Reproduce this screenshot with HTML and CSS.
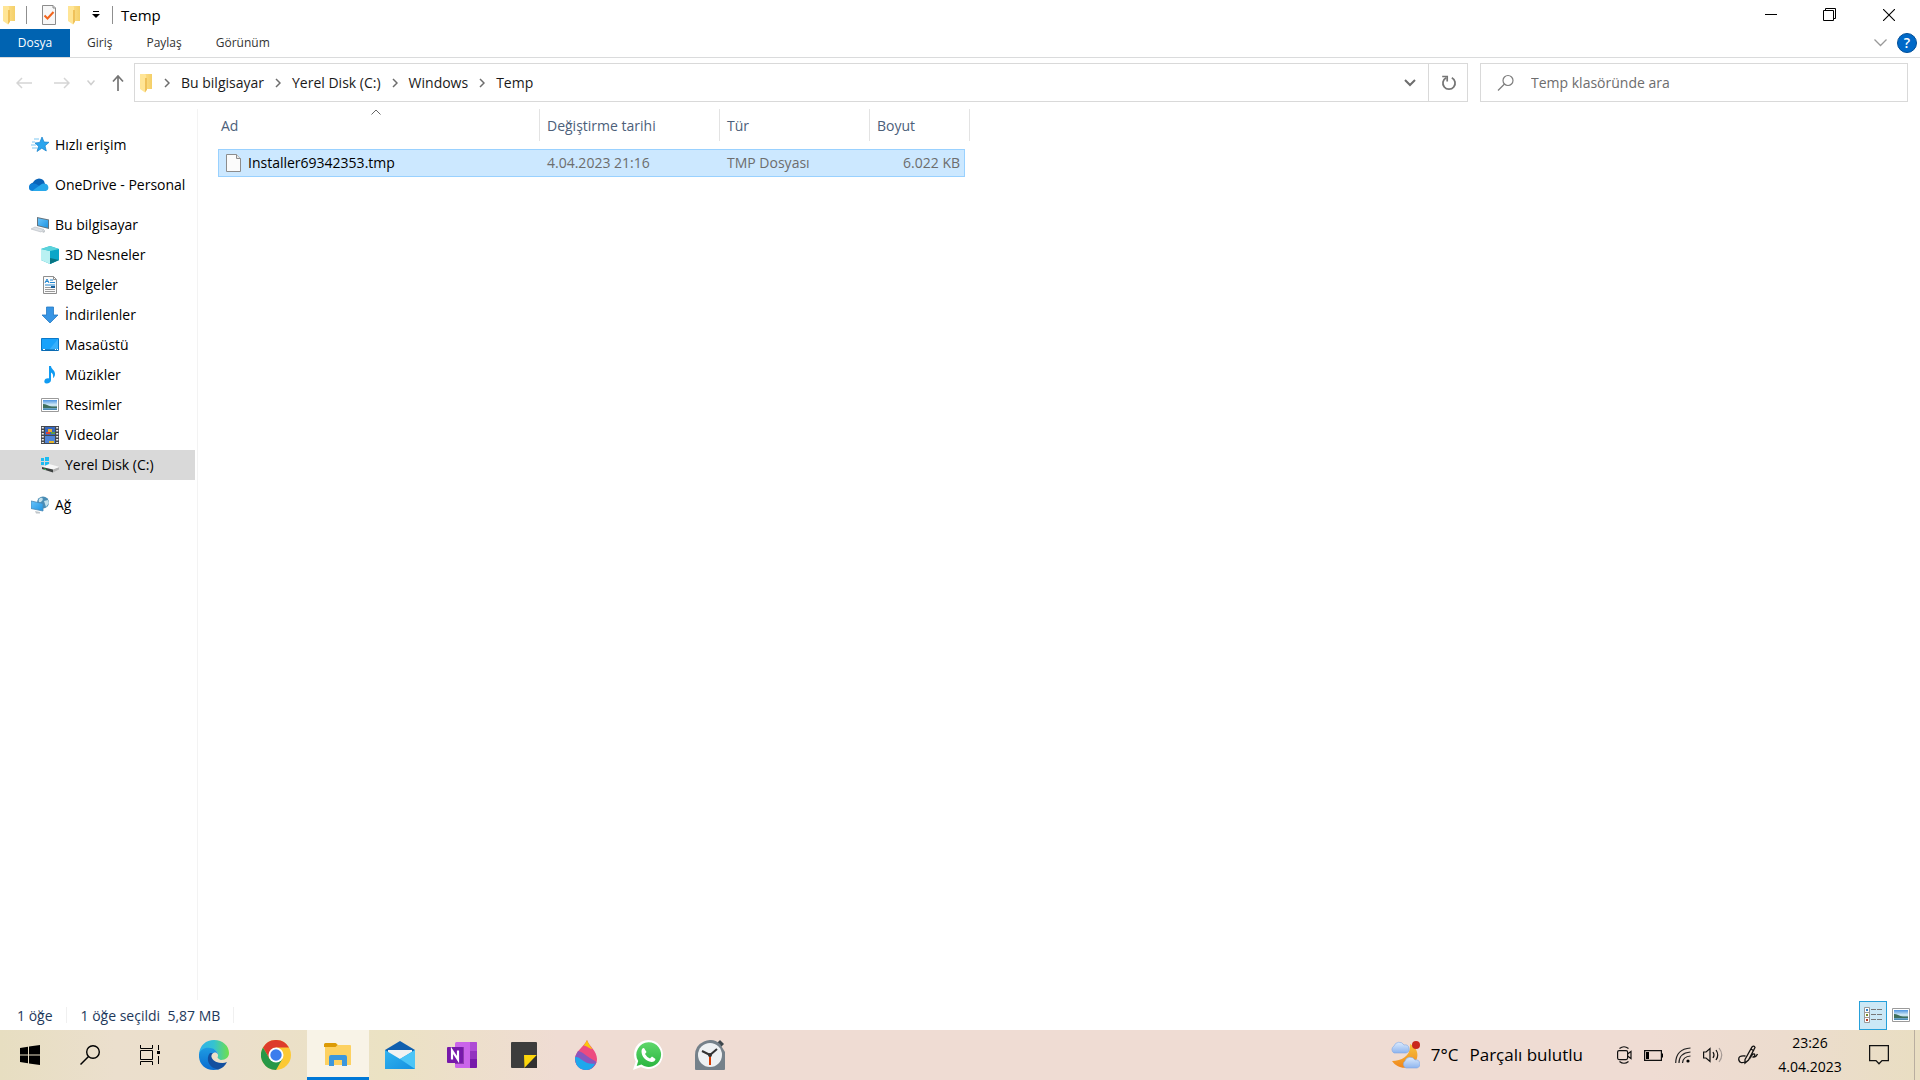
FILE: index.html
```html
<!DOCTYPE html>
<html lang="tr">
<head>
<meta charset="utf-8">
<meta name="viewport" content="width=device-width, initial-scale=1">
<title>Temp</title>
<link rel="stylesheet" href="styles.css">
</head>
<body>
<svg class="defs" aria-hidden="true">
  <defs>
    <linearGradient id="gFolder" x1="0" x2="1" y1="0" y2="0"><stop offset="0" stop-color="#fbdc85"/><stop offset="1" stop-color="#f4cf68"/></linearGradient>
    <linearGradient id="gScreen" x1="0" x2="1" y1="0" y2="1"><stop offset="0" stop-color="#69c4fb"/><stop offset="1" stop-color="#1f93e0"/></linearGradient>
    <linearGradient id="gEdgeTop" x1="0" x2="1" y1="0" y2="0"><stop offset="0" stop-color="#2fb0ea"/><stop offset=".5" stop-color="#35c3d0"/><stop offset="1" stop-color="#6fe04a"/></linearGradient>
    <linearGradient id="gEdgeLow" x1="0" x2="0" y1="0" y2="1"><stop offset="0" stop-color="#1e9be2"/><stop offset="1" stop-color="#0a6cd0"/></linearGradient>
    <linearGradient id="gMail" x1="0" x2="1" y1="0" y2="1"><stop offset="0" stop-color="#32b4f0"/><stop offset="1" stop-color="#1590e0"/></linearGradient>
    <linearGradient id="gWa" x1="0" x2="0" y1="0" y2="1"><stop offset="0" stop-color="#5fd76b"/><stop offset="1" stop-color="#2bb640"/></linearGradient>
    <linearGradient id="gMoon" x1="0" x2="0" y1="0" y2="1"><stop offset="0" stop-color="#f7c53c"/><stop offset="1" stop-color="#f0861c"/></linearGradient>
    <linearGradient id="gCloud" x1="0" x2="0" y1="0" y2="1"><stop offset="0" stop-color="#dcebfd"/><stop offset="1" stop-color="#8db4ee"/></linearGradient>
    <linearGradient id="gSky" x1="0" x2="0" y1="0" y2="1"><stop offset="0" stop-color="#4b93e0"/><stop offset=".5" stop-color="#d6ecf6"/><stop offset="1" stop-color="#3a80ae"/></linearGradient>
    <symbol id="folder" viewBox="0 0 14 20"><path d="M6 1h7v15H6z" fill="url(#gFolder)"/><path d="M1 1h5l1 1v17l-1 .5L1 16z" fill="#ffe596"/><path d="M6 5h2v12l-2 2z" fill="#efc15a"/></symbol>
    <symbol id="crumb" viewBox="0 0 6 10"><path d="M1 1l4 4-4 4" fill="none" stroke="#6d6d6d" stroke-width="1.5"/></symbol>
    <symbol id="picture" viewBox="0 0 18 14"><path d="M.5.5h17v13H.5z" fill="#fff" stroke="#9a9a9a"/><path d="M2 2h14v10H2z" fill="url(#gSky)"/><path d="M2 6c3 0 5 2 9 2.500h5V10H2z" fill="#3f6f5c"/></symbol>
  </defs>
</svg>

<header class="titlebar">
  <svg class="folder" aria-hidden="true"><use href="#folder"/></svg>
  <span class="divider"></span>
  <button class="quick" aria-label="Özellikler"><svg width="14" height="20" viewBox="0 0 14 20"><path d="M.5.5H11L13.500 3v16.500H.5z" fill="#f7f7f7" stroke="#8c8c8c"/><path d="M11 .5V3h2.500" fill="#ddd" stroke="#8c8c8c"/><path d="M2.500 10.500l3 3 6-6.500" fill="none" stroke="#f2641c" stroke-width="2"/></svg></button>
  <button class="quick" aria-label="Yeni klasör"><svg class="folder"><use href="#folder"/></svg></button>
  <button class="quick more" aria-label="Hızlı Erişim Araç Çubuğunu Özelleştir"><svg width="8" height="8" viewBox="0 0 8 8"><path d="M1 0h6v1H1zM0 3h8L4 7z"/></svg></button>
  <span class="divider"></span>
  <h1>Temp</h1>
  <div class="caption">
    <button aria-label="Simge durumuna küçült"><svg width="12" height="12" viewBox="0 0 12 12"><path d="M0 5.500h12" stroke="#000"/></svg></button>
    <button aria-label="Önceki boyut"><svg width="13" height="13" viewBox="0 0 13 13"><path d="M.5 2.500h10v10H.5zM2.500 2.500v-2h10v10h-2" fill="none" stroke="#000"/></svg></button>
    <button aria-label="Kapat"><svg width="12" height="12" viewBox="0 0 12 12"><path d="M0 0l12 12M12 0L0 12" stroke="#000" stroke-width="1.100"/></svg></button>
  </div>
</header>

<div class="ribbon">
  <button class="file">Dosya</button>
  <button>Giriş</button>
  <button>Paylaş</button>
  <button>Görünüm</button>
  <div class="ribbon-end">
    <button aria-label="Şeridi genişlet"><svg width="13" height="8" viewBox="0 0 13 8"><path d="M.5.500l6 6 6-6" fill="none" stroke="#9a9a9a" stroke-width="1.300"/></svg></button>
    <button class="help" aria-label="Yardım">?</button>
  </div>
</div>

<div class="location">
  <div class="history">
    <button aria-label="Geri"><svg width="16" height="12" viewBox="0 0 16 12"><path d="M16 6H1M6 1L1 6l5 5" fill="none" stroke="#d5d5d5" stroke-width="1.500"/></svg></button>
    <button aria-label="İleri"><svg width="16" height="12" viewBox="0 0 16 12"><path d="M0 6h15M10 1l5 5-5 5" fill="none" stroke="#d5d5d5" stroke-width="1.500"/></svg></button>
    <button class="small" aria-label="Son konumlar"><svg width="8" height="6" viewBox="0 0 8 6"><path d="M.5.500L4 4.500 7.500.5" fill="none" stroke="#cfcfcf" stroke-width="1.500"/></svg></button>
    <button class="small" aria-label="Yukarı"><svg width="12" height="16" viewBox="0 0 12 16"><path d="M6 16V1M1 6.500l5-5.500 5 5.500" fill="none" stroke="#757575" stroke-width="1.700"/></svg></button>
  </div>
  <div class="address">
    <nav class="crumbs" aria-label="Adres">
      <svg class="folder" aria-hidden="true"><use href="#folder"/></svg>
      <svg class="crumb" aria-hidden="true"><use href="#crumb"/></svg>
      <a href="#">Bu bilgisayar</a>
      <svg class="crumb" aria-hidden="true"><use href="#crumb"/></svg>
      <a href="#">Yerel Disk (C:)</a>
      <svg class="crumb" aria-hidden="true"><use href="#crumb"/></svg>
      <a href="#">Windows</a>
      <svg class="crumb" aria-hidden="true"><use href="#crumb"/></svg>
      <a href="#">Temp</a>
    </nav>
    <button aria-label="Önceki konumlar"><svg width="12" height="8" viewBox="0 0 12 8"><path d="M1 1l5 5 5-5" fill="none" stroke="#6d6d6d" stroke-width="2"/></svg></button>
    <button class="refresh" aria-label="Yenile"><svg width="16" height="16" viewBox="0 0 16 16"><path d="M5.200 2.700A6.100 6.100 0 1 0 10.800 2.700" fill="none" stroke="#757575" stroke-width="1.800"/><path d="M1.200 1.500h5v5" fill="none" stroke="#757575" stroke-width="1.700"/></svg></button>
  </div>
  <label class="search">
    <svg width="18" height="18" viewBox="0 0 18 18" aria-hidden="true"><circle cx="11" cy="6.500" r="5" fill="none" stroke="#7d7d7d" stroke-width="1.200"/><path d="M7.500 10L1 16.500" stroke="#7d7d7d" stroke-width="1.300"/></svg>
    <input type="search" placeholder="Temp klasöründe ara" aria-label="Temp klasöründe ara">
  </label>
</div>

<main class="explorer">
  <nav class="tree" aria-label="Gezinti bölmesi">
    <ul>
      <li><a href="#"><svg viewBox="0 0 18 18"><path d="M11 1l2 5 5 .3-4 3.500 1.300 5.200-4.500-2.800L6 15.500l1.500-5.200L4 7l4.800-.6z" fill="#2ba5ee" stroke="#1480cc" stroke-width=".7"/><path d="M3 3h5M1 6h3M0 9h5M1 12h5" stroke="#7cc7f2"/></svg>Hızlı erişim</a></li>
    </ul>
    <ul>
      <li><a href="#"><svg class="cloud" viewBox="0 0 20 14"><path d="M3 12a4 4 0 0 1 1-7.500A6.500 6.500 0 0 1 15 3l2 6-13 4z" fill="#0a64b8"/><path d="M3.500 13A3.700 3.700 0 0 1 3.800 5.600Q6 5 8 6.500L17 12z" fill="#0f7fd6"/><path d="M3 13l9-6.500a4.500 4.500 0 0 1 4-.8 3.800 3.800 0 0 1 1 7.300z" fill="#28a8ea"/></svg>OneDrive - Personal</a></li>
    </ul>
    <ul>
      <li><a href="#"><svg viewBox="0 0 18 18"><path d="M6 1l12 2.500V13L6 10z" fill="#64737e"/><path d="M7 2.200l10 2v7.500L7 9.300z" fill="url(#gScreen)"/><path d="M0 13l4-2 9 2.500-3 2.500z" fill="#dde1e5" stroke="#b3b9bf" stroke-width=".6"/><path d="M11 15l3-1v2l-2 1z" fill="#c3c8cc"/></svg>Bu bilgisayar</a></li>
      <li class="child"><a href="#"><svg viewBox="0 0 18 18"><path d="M9 0l9 3v11l-9 4-9-4V3z" fill="#22b5c8"/><path d="M0 3l9 2v13l-9-4z" fill="#b9f1f2"/><path d="M9 5l9-2v11l-9 4z" fill="#0ba6c8"/><path d="M0 3l9-3 9 3-9 2z" fill="#5bd3dc"/><path d="M9 12l9 2-9 4z" fill="#087482"/></svg>3D Nesneler</a></li>
      <li class="child"><a href="#"><svg viewBox="0 0 18 18"><path d="M2.500.5h10l3 3v14h-13z" fill="#fbfbfb" stroke="#8e8e8e"/><path d="M12.500.5v3h3" fill="none" stroke="#8e8e8e"/><path d="M4 7l2-4 2 4M4.500 5.500h3M9 4h3M9 6.500h5M4 9h10" fill="none" stroke="#2386cf"/><path d="M4 11.500h6M4 13.500h10M4 15.500h10" stroke="#9a9a9a"/><path d="M10 10h4v2h-4z" fill="#1b5f9a"/></svg>Belgeler</a></li>
      <li class="child"><a href="#"><svg viewBox="0 0 18 18"><path d="M5.500 1h7v8H17l-8 8-8-8h4.500z" fill="#3795e4" stroke="#257ac4" stroke-width=".8"/></svg>İndirilenler</a></li>
      <li class="child"><a href="#"><svg viewBox="0 0 18 18"><path d="M.5 2.500h17v12H.5z" fill="#18a2fb" stroke="#0b78c8"/><path d="M17 3v11H8z" fill="#37b0fc"/><path d="M1 14h16" stroke="#0a5d9c"/><path d="M2 13.500h2M14 13.500h1M16 13.500h1" stroke="#fff"/></svg>Masaüstü</a></li>
      <li class="child"><a href="#"><svg viewBox="0 0 18 18"><path d="M8 0h2c0 3 4 4 4 8 0 2-1 3.500-2 4 .6-3-.5-5-2-5.500V14c0 2-2 3.500-4.300 3.500S3 16 3.500 14.500 6 12 8 12.500z" fill="#109bf2"/></svg>Müzikler</a></li>
      <li class="child"><a href="#"><svg><use href="#picture"/></svg>Resimler</a></li>
      <li class="child"><a href="#"><svg viewBox="0 0 18 18"><path d="M0 0h18v18H0z" fill="#44474c"/><path d="M4 1h10v8H4z" fill="#3668c0"/><path d="M4 10h10v7H4z" fill="#4f84d6"/><path d="M7 3h4v3H7z" fill="#e9a92d"/><path d="M5 6h4v2H5z" fill="#d9433a"/><path d="M10 6h4v2h-4z" fill="#5d9c42"/><path d="M8 15h5v2H8z" fill="#e7b72c"/><path d="M1.800 1v16M16.200 1v16" stroke="#f1f1f1" stroke-width="2" stroke-dasharray="1.600 1.400"/></svg>Videolar</a></li>
      <li class="child selected"><a href="#" aria-current="true"><svg viewBox="0 0 18 18"><path d="M0 2h3v3H0zM4 1h4v4H4zM0 6h3v3H0zM4 6h4v4H4z" fill="#1cbcf2"/><path d="M1 11l7-3 11 3-7 3z" fill="#f7f7f7"/><path d="M1 11l11 2.500v3L1 13z" fill="#3d4140"/><path d="M12 13.500l7-2.500v2l-7 3.500z" fill="#b5b5b5"/><path d="M3 13l2 .6" stroke="#35d35a"/></svg>Yerel Disk (C:)</a></li>
    </ul>
    <ul>
      <li><a href="#"><svg viewBox="0 0 18 18"><circle cx="12" cy="6.500" r="6" fill="#4a8db5"/><path d="M8 3c3-3 5 0 3 2S7 7 8 3zM13 5l4-1 1 3-3 4z" fill="#c4e1ec"/><path d="M0 5l12 2.500v7.500L0 12.500z" fill="url(#gScreen)" stroke="#4a89b5" stroke-width=".8"/><path d="M4 15l5 1v1.500H5z" fill="#c0c6ca"/></svg>Ağ</a></li>
    </ul>
  </nav>

  <section class="files">
    <table>
      <colgroup><col class="c-name"><col class="c-date"><col class="c-type"><col class="c-size"><col class="c-rest"></colgroup>
      <thead>
        <tr><th scope="col" aria-sort="ascending">Ad<svg class="sort" width="10" height="6" viewBox="0 0 10 6"><path d="M.5 5.500L5 1l4.500 4.500" fill="none" stroke="#666"/></svg></th><th scope="col">Değiştirme tarihi</th><th scope="col">Tür</th><th scope="col" colspan="2">Boyut</th></tr>
      </thead>
      <tbody>
        <tr><td><span class="file-name"><svg width="15" height="18" viewBox="0 0 15 18"><path d="M.5.5h10l4 4v13H.5z" fill="#fbfbfb" stroke="#8c8c8c"/><path d="M10.500.5v4h4" fill="#e8e8e8" stroke="#8c8c8c"/></svg>Installer69342353.tmp</span></td><td>4.04.2023 21:16</td><td>TMP Dosyası</td><td>6.022 KB</td></tr>
      </tbody>
    </table>
  </section>
</main>

<footer class="status">
  <span>1 öğe</span>
  <span>1 öğe seçildi&nbsp; 5,87 MB</span>
  <div class="views">
    <button class="on" aria-label="Ayrıntılar"><svg width="18" height="16" viewBox="0 0 18 16"><path d="M.5.500h5v15h-5zM.5 5.500h5M.5 10.500h5" fill="#fff" stroke="#999"/><path d="M2 2h2v2H2z" fill="#2f7ec7"/><path d="M2 7h2v2H2z" fill="#7a8c2c"/><path d="M2 12h2v2H2z" fill="#b83a24"/><path d="M7 2.500h5M13 2.500h5M7 7.500h5M13 7.500h5M7 12.500h5M13 12.500h5" stroke="#777"/></svg></button>
    <button aria-label="Büyük simgeler"><svg width="18" height="14"><use href="#picture"/></svg></button>
  </div>
</footer>

<div class="taskbar">
  <div class="system">
    <button aria-label="Başlat"><svg width="20" height="20" viewBox="0 0 20 20"><path d="M0 3l8-1.200v7.700H0zM9 1.600L20 0v9.500H9zM0 10.500h8v7.700L0 17zM9 10.500h11V20L9 18.400z"/></svg></button>
    <button aria-label="Ara"><svg width="20" height="20" viewBox="0 0 20 20"><circle cx="13" cy="7" r="6.300" fill="none" stroke="#000" stroke-width="1.400"/><path d="M8.500 11.500L.5 19.500" stroke="#000" stroke-width="1.500"/></svg></button>
    <button aria-label="Görev görünümü"><svg width="20" height="20" viewBox="0 0 20 20"><path d="M.5 5.500h12v9H.5zM.5 0v3.500h12V0M.5 20v-3.500h12V20M18.500 0v5M18.500 11v8" fill="none" stroke="#000"/><path d="M17 6h3v3h-3z"/></svg></button>
  </div>
  <div class="apps">
    <button aria-label="Microsoft Edge"><svg width="30" height="30" viewBox="0 0 30 30"><path d="M0 14C1 5 7 0 15 0c9 0 15 6 15 13 0 4-3 7-8 7-4 0-5-1-4-3 2-3 0-8-6-8C6 9 2 11 0 14z" fill="url(#gEdgeTop)"/><path d="M0 14c1-4 6-7 11-6 5 0 8 4 8 7-3-3-7 0-6 4 1 5 5 9 8 10C7 33-1 24 0 14z" fill="url(#gEdgeLow)"/><path d="M11 13c-5 6-1 15 8 16.500 4-1 7-3.500 9-7.500-4 2-10 1-13-3-1-2-1-4-.5-6z" fill="#124f9f"/><path d="M18.500 17.500Q20 14 17 12.500c-3-.5-5 2-4.500 4.500C14 22 20 24 27.500 21.500L29 20Q21 21.500 18.500 17.500z" fill="#ece0c9"/></svg></button>
    <button aria-label="Google Chrome"><svg width="30" height="30" viewBox="0 0 30 30"><circle cx="15" cy="15" r="15" fill="#fcc934"/><path d="M2 7.500A15 15 0 0 1 28 7.500H15L8.500 18.800z" fill="#dd3b2c"/><path d="M2 7.500A15 15 0 0 0 15 30l6.500-11.200H8.500z" fill="#279847"/><circle cx="15" cy="15" r="7.500" fill="#fff"/><circle cx="15" cy="15" r="5.700" fill="#3b7ded"/></svg></button>
    <button class="active" aria-label="Dosya Gezgini"><svg width="28" height="24" viewBox="0 0 28 24"><path d="M1 1.500Q1 0 2.500 0H12l2 2h12q1 0 1 1v19H1z" fill="#fdd161"/><path d="M0 1.500Q0 0 1.500 0h10l2 2-2 2H0z" fill="#dc9a05"/><path d="M5 23V14q0-2 2-2h14q2 0 2 2v9h-5v-6h-8v6z" fill="#3c97dd"/></svg></button>
    <button aria-label="Posta"><svg width="30" height="28" viewBox="0 0 30 28"><path d="M0 9L15 0l15 9v6H0z" fill="#0f5fae"/><path d="M3 9h24v6l-12 8L3 15z" fill="#f2f2f2"/><path d="M0 9l15 9 15-9v19H0z" fill="url(#gMail)"/><path d="M30 9v19L15 18z" fill="#4cc5f7"/></svg></button>
    <button aria-label="OneNote"><svg width="30" height="26" viewBox="0 0 30 26"><path d="M8 1.500Q8 0 9.500 0H29q1 0 1 1v24q0 1-1 1H9.500Q8 26 8 24.500z" fill="#ca64ea"/><path d="M23 0h6q1 0 1 1v8h-7z" fill="#ae4bd5"/><path d="M23 9h7v8h-7z" fill="#9332bf"/><path d="M23 17h7v8q0 1-1 1h-6z" fill="#7719aa"/><path d="M8 5h9v17H8z" fill="#8e3bb0"/><rect y="5" width="16" height="16" rx="1" fill="#7719aa"/><path d="M5 17.500V8.500l6 9v-9" fill="none" stroke="#fff" stroke-width="2.200"/></svg></button>
    <button aria-label="Yapışkan Notlar"><svg width="26" height="26" viewBox="0 0 26 26"><rect width="26" height="26" rx="1" fill="#3d3d3d"/><path d="M13 13h13L13.500 26z" fill="#fdd60c"/><path d="M26 13v13H13.500z" fill="#303030"/></svg></button>
    <button aria-label="Paint 3D"><svg width="24" height="30" viewBox="0 0 24 30"><path d="M13 0c2 6 10 11 10 19a11 11 0 0 1-22 0C1 11 10 7 13 0z" fill="#ed4b80"/><path d="M13 0c1 3 3 6 5.500 9-3 0-5-3-9-3.500C11 4 12 2 13 0z" fill="#fbc60b"/><path d="M4 11c5 1 8 5 18.500 11A11 11 0 0 1 12 30C3 29 0 22 1.500 16z" fill="#8a56bd"/><path d="M1 17c6-1 8 8 20 6.500C19 28 16 30 12 30 5 30 1 25 1 17z" fill="#1ea8ec"/></svg></button>
    <button aria-label="WhatsApp"><svg width="30" height="30" viewBox="0 0 30 30"><path d="M15.500 0A14.500 14.500 0 1 1 8 27L0 30l2.700-8.500A14.500 14.500 0 0 1 15.500 0z" fill="#fff"/><path d="M15.500 2.300A12.300 12.300 0 1 1 8.500 24.500L3.700 26l1.500-5A12.300 12.300 0 0 1 15.500 2.300z" fill="url(#gWa)"/><path d="M11 8l2.500 4-1.500 2q2 3.500 5 4.500l2-2 3.500 2.500q-.5 3-4 3C13 21.500 8.500 16.500 8.500 11.500 8.500 9 9.500 8 11 8z" fill="#fff"/></svg></button>
    <button aria-label="Alarmlar ve Saat"><svg width="30" height="30" viewBox="0 0 30 30"><path d="M22 3l3-3 4 4-3 3z" fill="#3e464c"/><path d="M0 15A15 15 0 0 1 25 4l5 8v17q0 1-1 1H1q-1 0-1-1z" fill="#75818a"/><circle cx="15" cy="15" r="12" fill="#eef1f3"/><path d="M7 11l8 4 7-6" fill="none" stroke="#333" stroke-width="2"/><path d="M15 15v10" stroke="#d83b01" stroke-width="2"/><circle cx="15" cy="15" r="2" fill="#333"/></svg></button>
  </div>
  <div class="tray">
    <button class="weather"><svg width="30" height="28" viewBox="0 0 30 28"><path d="M20 3c11 5 9 19-1 23-6 2-13 0-17-6 10 0 19-5 18-17z" fill="url(#gMoon)"/><path d="M4 12a4 4 0 0 1 0-7 5.500 5.500 0 0 1 10-1 3.800 3.800 0 0 1 2 8z" fill="url(#gCloud)" stroke="#80a8e6" stroke-width=".6"/><path d="M16 27a4 4 0 0 1-1-7 5.500 5.500 0 0 1 10-1 4 4 0 0 1 2 8z" fill="url(#gCloud)" stroke="#80a8e6" stroke-width=".6"/><circle cx="26" cy="4" r="4" fill="#c9281c"/></svg><span>7°C</span><span>Parçalı bulutlu</span></button>
    <button aria-label="Şimdi Toplan"><svg width="15" height="18" viewBox="0 0 15 18"><path d="M2.500 2.500Q7 -1 11.500 2.500M2.500 15.500Q7 19 11.500 15.500M10.500 8l3.500-2.500v7L10.500 10" fill="none" stroke="#111" stroke-width="1.200"/><rect x=".6" y="4.600" width="10" height="9" rx="1.500" fill="none" stroke="#111" stroke-width="1.200"/></svg></button>
    <button aria-label="Pil"><svg width="19" height="11" viewBox="0 0 19 11"><path d="M.6.6h16.800v9.800H.6z" fill="none" stroke="#111" stroke-width="1.200"/><path d="M18 3.500h1v4h-1zM2 2h3v7H2z"/></svg></button>
    <button aria-label="Ağ bağlantısı"><svg width="16" height="16" viewBox="0 0 16 16"><path d="M.7 16Q1 2 15.500 1M4 16Q4 6 15.500 5M7.500 16Q8 9.500 15.500 9" fill="none" stroke="#222" stroke-width="1.200"/><circle cx="13" cy="14" r="1.600"/></svg></button>
    <button aria-label="Ses"><svg width="20" height="18" viewBox="0 0 20 18"><path d="M.6 6h2.500L7 2.500v13L3 12H.6z" fill="none" stroke="#111" stroke-width="1.200"/><path d="M10 6q2 3 0 6M13 4q3.500 5 0 10" fill="none" stroke="#111" stroke-width="1.200"/><path d="M16 2q5.500 7 0 14" fill="none" stroke="#a49994" stroke-width="1.200"/></svg></button>
    <button class="pen" aria-label="Windows Ink"><svg width="20" height="20" viewBox="0 0 20 20"><path d="M7 14.500L14 2q2-2 3 .5L10.500 15 7 18zM13 4l3 2M7.500 11Q0 10 .8 15q1.200 4 6 2M11.500 14q3-6 5-5 1 2-1.500 3 2.500 1 4.500-3" fill="none" stroke="#111" stroke-width="1.300"/></svg></button>
    <button class="clock"><time>23:26</time><time>4.04.2023</time></button>
    <button class="notice" aria-label="Bildirimler"><svg width="20" height="20" viewBox="0 0 20 20"><path d="M.6.6h18.800v15H13L10 18.800 7 15.600H.6z" fill="none" stroke="#111" stroke-width="1.300"/></svg></button>
    <button class="desktop" aria-label="Masaüstünü göster"></button>
  </div>
</div>
</body>
</html>
```
FILE: styles.css
```css
* { box-sizing: border-box; }

body {
  margin: 0;
  min-height: 100vh;
  display: flex;
  flex-direction: column;
  background: #fff;
  color: #1a1a1a;
  font: 14px/20px "Open Sans", "Noto Sans", sans-serif;
}

button {
  display: flex;
  align-items: center;
  justify-content: center;
  margin: 0;
  padding: 0;
  border: 0;
  background: none;
  color: inherit;
  font: inherit;
}

a { color: inherit; text-decoration: none; }
ul { list-style: none; margin: 0; padding: 0; }
svg { flex: none; display: block; }

.defs { position: absolute; width: 0; height: 0; }
.folder { width: 14px; height: 20px; }
.crumb { width: 6px; height: 10px; }

/* Title bar */
.titlebar { display: flex; align-items: center; height: 29px; padding-left: 2px; }
.divider { width: 1px; height: 18px; margin-left: 10px; background: #8f8f8f; }
.quick { margin-left: 15px; }
.quick + .quick { margin-left: 11px; }
.quick.more { margin-right: 2px; }
h1 { margin: 0 0 0 8px; font-size: 15px; font-weight: 400; line-height: 20px; color: #000; }
.caption { display: flex; margin-left: auto; }
.caption button { width: 58px; height: 29px; }
.caption button:last-child { width: 62px; }

/* Ribbon tabs */
.ribbon { display: flex; height: 29px; border-bottom: 1px solid #dadbdc; font-size: 12px; color: #333; }
.ribbon > button { padding: 0 17px; }
.ribbon > .file { width: 70px; background: #0063b1; color: #fff; }
.ribbon-end { display: flex; gap: 10px; margin-left: auto; padding-right: 3px; align-items: center; }
.ribbon-end .help { width: 20px; height: 20px; border: 1px solid #004e98; border-radius: 50%; background: #0069c8; color: #fff; font-size: 14px; font-weight: 600; }

/* Address row */
.location { display: flex; align-items: center; gap: 12px; padding: 5px 12px 0 16px; }
.history { display: flex; align-items: center; gap: 22px; width: 106px; }
.history .small { margin-left: -5px; }
.address { display: flex; flex: 1; height: 39px; border: 1px solid #d9d9d9; }
.crumbs { display: flex; flex: 1; align-items: center; gap: 11px; padding-left: 4px; }
.address button { width: 38px; padding-left: 2px; }
.address .refresh { width: 39px; border-left: 1px solid #d9d9d9; }
.search { display: flex; align-items: center; gap: 16px; width: 428px; height: 39px; padding: 0 16px; border: 1px solid #d9d9d9; }
.search input { flex: 1; min-width: 0; padding: 0; border: 0; outline: 0; background: none; font: inherit; color: #333; }
.search input::placeholder { color: #6d6d6d; opacity: 1; }

/* Folder tree */
.explorer { display: flex; flex: 1; padding-top: 7px; }
.tree { width: 198px; padding: 21px 2px 0 0; border-right: 1px solid #f3f3f3; color: #000; }
.tree ul { margin-bottom: 10px; }
.tree a { display: flex; align-items: center; gap: 6px; height: 30px; padding-left: 31px; white-space: nowrap; }
.tree .child a { padding-left: 41px; }
.tree svg { width: 18px; height: 18px; }
.tree .cloud { width: 20px; height: 14px; margin-left: -2px; }
.tree .selected { background: #d9d9d9; }

/* File list */
.files { flex: 1; padding-left: 20px; }
table { width: 752px; table-layout: fixed; border-spacing: 0; }
.c-name { width: 322px; }
.c-date { width: 180px; }
.c-type { width: 150px; }
.c-size { width: 95px; }
.c-rest { width: 5px; }
th {
  position: relative;
  height: 40px;
  padding: 0 7px 6px;
  font-weight: 400;
  text-align: left;
  color: #4c607a;
  background: linear-gradient(#e3e3e3, #e3e3e3) right top / 1px 32px no-repeat;
}
th:first-child { padding-left: 3px; }
.sort { position: absolute; top: 0; left: 50%; margin-left: -8px; }
td { height: 28px; padding: 0 7px; border: solid #99d1ff; border-width: 1px 0; background: #cce8ff; color: #6d6d6d; white-space: nowrap; }
td:first-child { border-left-width: 1px; color: #000; }
td:last-child { padding-right: 4px; border-right-width: 1px; text-align: right; }
.file-name { display: flex; align-items: center; gap: 7px; }

/* Status bar */
.status { display: flex; align-items: center; height: 30px; color: #1e395b; }
.status span { padding: 2px 13px 0 14px; border-right: 1px solid #f0f0f0; line-height: 14px; }
.status span:first-child { padding-left: 17px; }
.views { display: flex; align-items: center; gap: 5px; margin-left: auto; padding-right: 10px; }
.views .on { width: 28px; height: 29px; border: 1px solid #26a0da; background: #cbe8f6; }

/* Taskbar */
.taskbar {
  display: flex;
  height: 50px;
  color: #000;
  background: linear-gradient(90deg, #e7dec1 0, #ebdfcd 6%, #ebdfcb 12%, #ebe2c3 20%, #efdcd3 29%, #efdcd3 86%, #ecdcce 93%, #e9dec2 100%);
}
.system, .apps, .tray { display: flex; }
.system button { width: 60px; }
.apps { padding-left: 3px; }
.apps button { width: 62px; border-bottom: 3px solid transparent; padding-top: 3px; }
.apps .active { border-color: #0078d7; background: #f8f3e7; }
.tray { margin-left: auto; align-items: stretch; gap: 12px; }
.weather { gap: 11px; margin-right: 22px; font-size: 17px; }
.pen { margin-left: 3px; }
.clock { flex-direction: column; gap: 4px; width: 76px; margin-left: 2px; }
.notice { margin-left: 9px; }
.desktop { width: 6px; margin-left: 13px; border-left: 1px solid #b9aea0; }
```
